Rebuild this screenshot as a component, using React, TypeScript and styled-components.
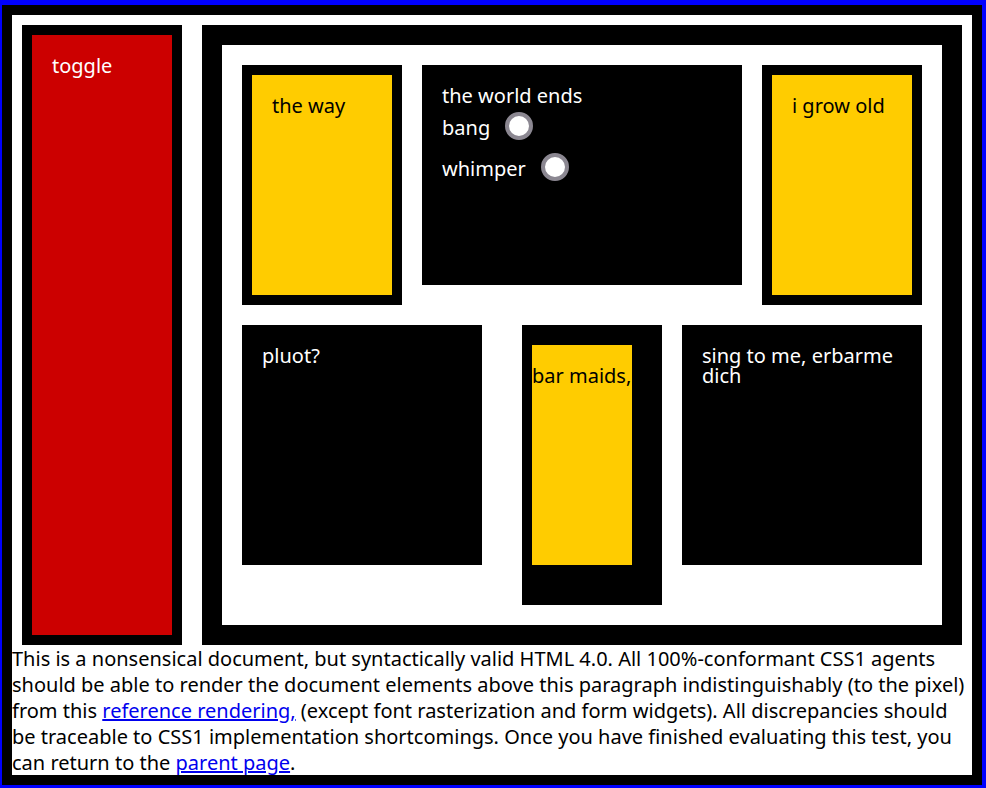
import React from "react";
import styled, { createGlobalStyle } from "styled-components";

const GlobalStyle = createGlobalStyle`
  html, body {
    margin: 0;
    padding: 0;
    background: #0000ff;
  }
  body {
    font-family: "Noto Sans", "DejaVu Sans", sans-serif;
    font-size: 20px;
    line-height: 1;
    color: #ffffff;
  }
`;

const Frame = styled.div`
  box-sizing: content-box;
  width: 960px;
  margin: 5px 0 3px 2px;
  border: 10px solid #000;
  background: #fff;
`;

const TopRow = styled.div`
  display: flex;
  justify-content: space-between;
  align-items: flex-start;
  padding: 10px 10px 0;
`;

const Term = styled.div`
  box-sizing: content-box;
  width: 100px;
  height: 559px;
  padding: 21px 20px 20px;
  border: 10px solid #000;
  background: #cc0000;
  color: #fff;
`;

const Definition = styled.div`
  box-sizing: content-box;
  width: 680px;
  height: 540px;
  padding: 20px;
  border: 20px solid #000;
  background: #fff;
  display: flex;
  flex-direction: column;
`;

const ItemRow = styled.div`
  display: flex;
  align-items: flex-start;
`;

const YellowItem = styled.div`
  box-sizing: content-box;
  width: 100px;
  height: 179px;
  padding: 21px 20px 20px;
  border: 10px solid #000;
  background: #ffcc00;
  color: #000;
`;

const Bar = styled.div`
  box-sizing: content-box;
  width: 280px;
  height: 179px;
  padding: 21px 20px 20px;
  margin: 0 20px;
  background: #000;
  color: #fff;
`;

const FormRow = styled.div`
  display: flex;
  align-items: center;
  gap: 15px;
  height: 41px;
  margin-top: -1px;
  margin-bottom: 1px;
`;

const RowLabel = styled.span`
  padding-top: 4px;
`;

const Radio = styled.input`
  appearance: none;
  -webkit-appearance: none;
  box-sizing: border-box;
  width: 28px;
  height: 28px;
  margin: 0;
  border: 4px solid #8b8791;
  border-radius: 50%;
  background: #fff;
`;

const Baz = styled.div`
  box-sizing: content-box;
  width: 200px;
  height: 199px;
  padding: 21px 20px 20px;
  margin-top: 20px;
  background: #000;
  color: #fff;
`;

const Quote = styled.div`
  box-sizing: content-box;
  width: 100px;
  height: 199px;
  padding-top: 21px;
  margin: 20px 0 0 40px;
  border-style: solid;
  border-color: #000;
  border-width: 20px 30px 40px 10px;
  background: #ffcc00;
  color: #000;
`;

const Heading = styled.h1`
  box-sizing: content-box;
  width: 200px;
  height: 199px;
  padding: 21px 20px 20px;
  margin: 20px 0 0 20px;
  background: #000;
  color: #fff;
  font-size: 20px;
  font-weight: normal;
  line-height: 1;
`;

const Footer = styled.p`
  margin: 0 0 -1px;
  padding-top: 1px;
  color: #000;
  line-height: 26px;
`;

const Link = styled.a`
  color: #0000ee;
  text-decoration: underline;
`;

export default function App() {
  return (
    <>
      <GlobalStyle />
      <Frame>
        <TopRow>
          <Term>toggle</Term>
          <Definition>
            <ItemRow>
              <YellowItem>the way</YellowItem>
              <Bar>
                <div>the world ends</div>
                <FormRow>
                  <RowLabel>bang</RowLabel>
                  <Radio type="radio" name="foo" value="off" />
                </FormRow>
                <FormRow>
                  <RowLabel>whimper</RowLabel>
                  <Radio type="radio" name="foo2" value="on" />
                </FormRow>
              </Bar>
              <YellowItem>i grow old</YellowItem>
            </ItemRow>
            <ItemRow>
              <Baz>pluot?</Baz>
              <Quote>bar maids,</Quote>
              <Heading>sing to me, erbarme dich</Heading>
            </ItemRow>
          </Definition>
        </TopRow>
        <Footer>
          This is a nonsensical document, but syntactically valid HTML 4.0. All
          100%-conformant CSS1 agents should be able to render the document
          elements above this paragraph indistinguishably (to the pixel) from
          this <Link href="#">reference rendering,</Link> (except font
          rasterization and form widgets). All discrepancies should be
          traceable to CSS1 implementation shortcomings. Once you have finished
          evaluating this test, you can return to the{" "}
          <Link href="#">parent page</Link>.
        </Footer>
      </Frame>
    </>
  );
}
